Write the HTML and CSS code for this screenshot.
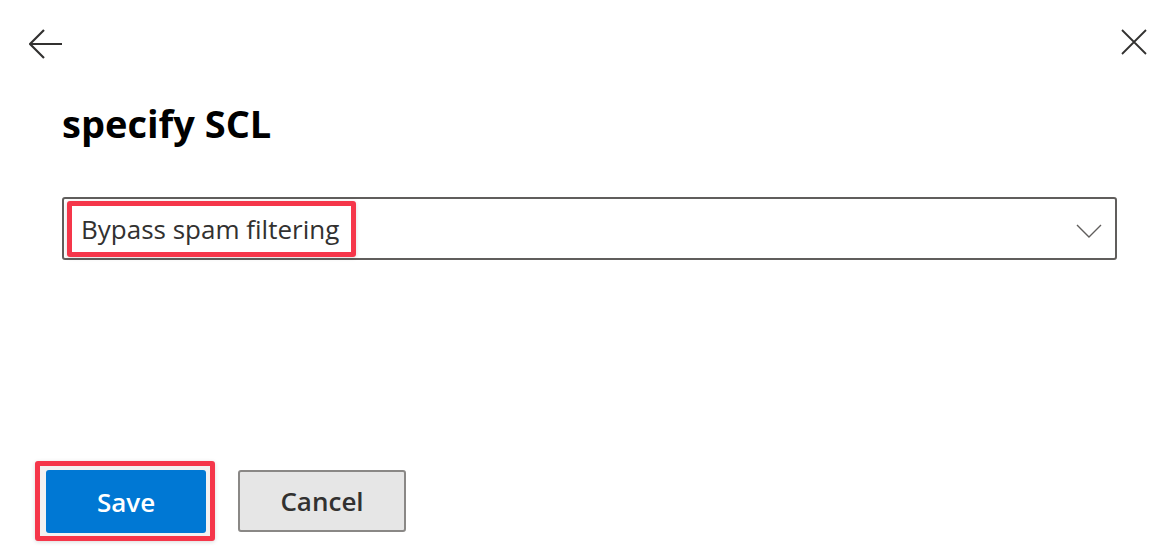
FILE: index.html
```html
<!DOCTYPE html>
<html lang="en">
<head>
  <meta charset="UTF-8" />
  <meta name="viewport" content="width=device-width, initial-scale=1.0"/>
  <title>specify SCL</title>
  <link rel="stylesheet" href="styles.css">
</head>
<body>
  <div class="panel">
    <div class="topbar">
      <button class="icon-btn" aria-label="Back">
        <svg width="34" height="30" viewBox="0 0 34 30">
          <path d="M1 15 H33 M15 1 L1 15 L15 29" fill="none" stroke="#323130" stroke-width="2.2"/>
        </svg>
      </button>
      <button class="icon-btn" aria-label="Close">
        <svg width="26" height="26" viewBox="0 0 26 26">
          <path d="M1 1 L25 25 M25 1 L1 25" fill="none" stroke="#323130" stroke-width="1.8"/>
        </svg>
      </button>
    </div>

    <h1 class="title">specify SCL</h1>

    <div class="dropdown">
      <span class="mark mark-field">Bypass spam filtering</span>
      <svg class="chevron" width="26" height="14" viewBox="0 0 26 14">
        <path d="M1 1 L13 13 L25 1" fill="none" stroke="#605e5c" stroke-width="1.4"/>
      </svg>
    </div>

    <div class="footer">
      <span class="mark mark-btn"><button class="btn primary">Save</button></span>
      <button class="btn">Cancel</button>
    </div>
  </div>
</body>
</html>
```

FILE: styles.css
```css
body {
  margin: 0;
  background: white;
  font-family: "Open Sans", "Noto Sans", Arial, sans-serif;
  color: #323130;
}
.panel {
  height: 558px;
  display: flex;
  flex-direction: column;
}
.topbar {
  display: flex;
  justify-content: space-between;
  align-items: flex-start;
  padding: 29px 25px 0 29px;
}
.icon-btn {
  background: none;
  border: none;
  padding: 0;
  display: block;
}
.icon-btn svg {
  display: block;
}
.title {
  margin: 40px 0 0 62px;
  font-size: 38px;
  line-height: 48px;
  font-weight: 700;
  color: #000;
}
.dropdown {
  margin: 50px 55px 0 62px;
  height: 63px;
  box-sizing: border-box;
  border: 2px solid #605e5c;
  border-radius: 3px;
  padding: 2px 13px 0 3px;
  display: flex;
  justify-content: space-between;
  align-items: flex-start;
}
.chevron {
  margin-top: 23px;
}
.mark {
  display: inline-block;
  border: 5px solid #f5364a;
  border-radius: 3px;
  box-shadow: 0 1px 4px rgba(0,0,0,0.15);
}
.mark-field {
  padding: 7px 12px 7px 9px;
  font-size: 26px;
  line-height: 32px;
  background: #fff;
}
.mark-btn {
  padding: 4px 4px 3px 6px;
  background: #f2f2f2;
}
.footer {
  margin-top: auto;
  padding: 0 0 17px 35px;
  display: flex;
  align-items: center;
  gap: 23px;
}
.btn {
  display: block;
  box-sizing: border-box;
  width: 168px;
  height: 62px;
  font-family: inherit;
  font-size: 26px;
  font-weight: 600;
  color: #323130;
  background: #e6e6e6;
  border: 2px solid #8a8886;
  border-radius: 3px;
}
.primary {
  width: 160px;
  height: 63px;
  color: white;
  background: #0078d4;
  border: none;
}
```
